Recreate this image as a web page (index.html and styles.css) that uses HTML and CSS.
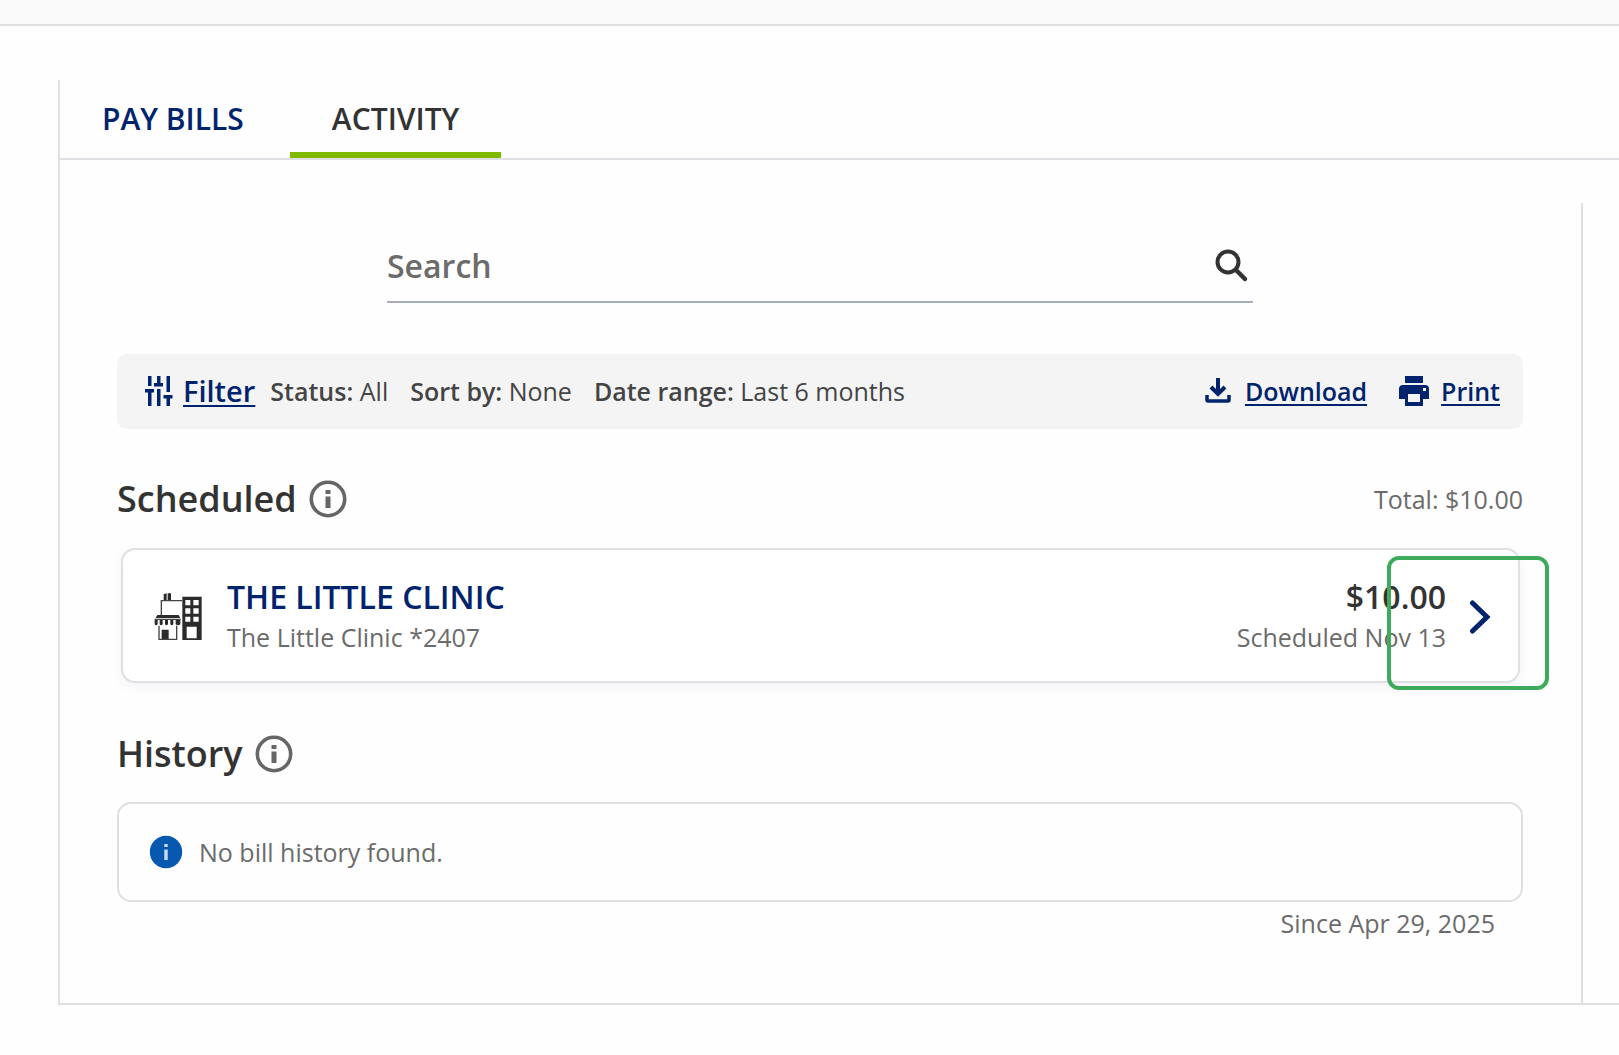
FILE: index.html
```
<!DOCTYPE html>
<html lang="en">
<head>
    <meta charset="UTF-8">
    <meta name="viewport" content="width=device-width, initial-scale=1.0">
    <title>Bill Pay Activity</title>
    <link rel="stylesheet" href="styles.css">
</head>
<body>
    <header class="topbar"></header>

    <div class="panel">
        <nav class="tabs">
            <a class="tab" href="#pay">PAY BILLS</a>
            <a class="tab active" href="#activity">ACTIVITY</a>
        </nav>

        <main class="content">
            <form class="search">
                <input type="text" id="search" name="search" placeholder="Search" aria-label="Search">
                <button type="submit" aria-label="Search bills">
                    <svg width="44" height="44" viewBox="0 0 44 44" fill="none" stroke="#333" stroke-linecap="round">
                        <circle cx="19" cy="18" r="10.5" stroke-width="4"/>
                        <path d="M27 26l9 9" stroke-width="4.5"/>
                    </svg>
                </button>
            </form>

            <div class="toolbar">
                <a class="tool filter" href="#filter">
                    <svg width="28" height="30" viewBox="0 0 28 30" fill="#00236e">
                        <path d="M3 0h3.5v10H3zM0 13h9v3.5H6.5V30H3V16.5H0zM12 0h3.5v7H18v3.5H9V7h3zM12 13h3.5v17H12zM21.5 0H25v16h-3.5zM18.5 19h9v3.5H25V30h-3.5v-7.5h-3z"/>
                    </svg>
                    <span>Filter</span>
                </a>
                <span class="option"><b>Status:</b> All</span>
                <span class="option"><b>Sort by:</b> None</span>
                <span class="option"><b>Date range:</b> Last 6 months</span>
                <div class="actions">
                    <a class="tool download" href="#download">
                        <svg width="26" height="26" viewBox="0 0 26 26" fill="none" stroke="#00236e" stroke-width="4">
                            <path d="M13 0v15M6 9l7 7 7-7"/>
                            <path d="M2 17v5q0 1 1 1h20q1 0 1-1v-5" stroke-width="3.5"/>
                        </svg>
                        <span>Download</span>
                    </a>
                    <a class="tool" href="#print">
                        <svg width="30" height="30" viewBox="0 0 30 30" fill="#00236e">
                            <path d="M6 0h18v7H6z"/>
                            <path fill-rule="evenodd" d="M4 9h22q4 0 4 4v10h-6v7H6v-7H0V13q0-4 4-4zM9 18v8h12v-8zM24 12v3h3v-3z"/>
                        </svg>
                        <span>Print</span>
                    </a>
                </div>
            </div>

            <section class="scheduled">
                <div class="heading">
                    <h2>Scheduled</h2>
                    <svg width="38" height="38" viewBox="0 0 38 38" fill="#666">
                        <circle cx="19" cy="19" r="16.7" fill="none" stroke="#666" stroke-width="3.6"/>
                        <path d="M16.5 10h5v4h-5zM16.5 16.5h5V28h-5z"/>
                    </svg>
                    <span class="total">Total: $10.00</span>
                </div>

                <div class="bill">
                    <svg width="48" height="48" viewBox="0 0 144 144">
                        <path fill="#2b2b2b" fill-rule="evenodd" d="M85 11h58v130H85zM94 21v16h15V21zM118 21v16h16V21zM94 46v16h15V46zM118 46v16h16V46zM94 71v15h15V71zM118 71v15h16V71zM98 101v35h30v-35z"/>
                        <path fill="#2b2b2b" d="M29 4l9-3v20h-9zM41 1h10v20H41zM10 66h64l5 9H5zM2 80h9v14q-5 6-9 0zM17 80h9v14q-5 6-9 0zM33 80h9v14q-5 6-9 0zM49 80h9v14q-5 6-9 0zM65 80h14v14q-7 6-14 0zM23 110h21v30H23z"/>
                        <path fill="none" stroke="#444" stroke-width="4" d="M22 66V23h63M2 79h78M15 98v41h53V98"/>
                    </svg>
                    <div class="payee">
                        <a class="name" href="#bill">THE LITTLE CLINIC</a>
                        <span class="detail">The Little Clinic *2407</span>
                    </div>
                    <div class="amount">
                        <span class="name">$10.00</span>
                        <span class="detail">Scheduled Nov 13</span>
                    </div>
                    <button class="open" type="button" aria-label="Open bill">
                        <svg width="22" height="36" viewBox="0 0 22 36" fill="none" stroke="#00236e" stroke-width="5" stroke-linecap="round">
                            <path d="M3.5 4L18 18 3.5 32"/>
                        </svg>
                    </button>
                    <div class="highlight"></div>
                </div>
            </section>

            <section class="history">
                <div class="heading">
                    <h2>History</h2>
                    <svg width="38" height="38" viewBox="0 0 38 38" fill="#666">
                        <circle cx="19" cy="19" r="16.7" fill="none" stroke="#666" stroke-width="3.6"/>
                        <path d="M16.5 10h5v4h-5zM16.5 16.5h5V28h-5z"/>
                    </svg>
                </div>

                <div class="empty">
                    <svg width="34" height="34" viewBox="0 0 34 34" fill="#c9dcf0">
                        <circle cx="17" cy="17" r="16.2" fill="#0759b0"/>
                        <path d="M15.3 9h3.4v3h-3.4zM15.3 14.5h3.4V25h-3.4z"/>
                    </svg>
                    <span>No bill history found.</span>
                </div>
                <p class="since">Since Apr 29, 2025</p>
            </section>
        </main>
    </div>
</body>
</html>
```

FILE: styles.css
```
* {
  box-sizing: border-box;
}

body {
  margin: 0;
  background-color: #fefefe;
  color: #333;
  font-family: "Open Sans", "Noto Sans", sans-serif;
  font-size: 25px;
  line-height: 36px;
}

a {
  color: #00236e;
}

svg {
  display: block;
  flex-shrink: 0;
}

button {
  padding: 0;
  border: 0;
  background: none;
  cursor: pointer;
}

.topbar {
  height: 26px;
  background-color: #fafafa;
  border-bottom: 2px solid #e0e0e2;
}

.panel {
  margin: 54px 0 0 58px;
  border-left: 2px solid #dfdfe4;
  border-bottom: 2px solid #dfdfe4;
}

/* Tabs */
.tabs {
  display: flex;
  gap: 4px;
  height: 80px;
  border-bottom: 2px solid #dfdfe4;
}

.tab {
  padding: 19px 42px 0;
  border-bottom: 6px solid transparent;
  font-size: 30px;
  font-weight: 600;
  line-height: 40px;
  text-decoration: none;
}

.tab.active {
  color: #333;
  border-bottom-color: #80ba00;
}

.content {
  margin: 43px 36px 0 0;
  padding: 32px 58px 62px 57px;
  border-right: 2px solid #dfdfe4;
}

/* Search */
.search {
  display: flex;
  align-items: center;
  width: 866px;
  max-width: 100%;
  height: 68px;
  margin: 0 auto 51px;
  padding-bottom: 4px;
  border-bottom: 2px solid #a8acb8;
}

.search input {
  flex: 1;
  min-width: 0;
  padding: 0 0 2px;
  border: 0;
  outline: 0;
  background: none;
  color: #333;
  font-family: inherit;
  font-size: 32px;
  font-weight: 600;
}

.search input::placeholder {
  color: #6b6b6b;
  opacity: 1;
}

/* Filter bar */
.toolbar {
  display: flex;
  align-items: center;
  gap: 22px;
  min-height: 75px;
  padding: 0 23px 2px 28px;
  border-radius: 10px;
  background-color: #f4f4f4;
}

.toolbar b {
  font-weight: 600;
}

.option {
  color: #444;
}

.tool {
  display: flex;
  align-items: center;
  gap: 12px;
  font-weight: 600;
  text-decoration: none;
}

.tool span {
  text-decoration: underline;
  text-decoration-thickness: 2px;
  text-underline-offset: 3px;
}

.filter {
  gap: 10px;
  margin-right: -7px;
  font-size: 29px;
}

.download {
  gap: 14px;
}

.actions {
  display: flex;
  gap: 32px;
  margin-left: auto;
}

/* Section headings */
.heading {
  display: flex;
  align-items: center;
  height: 50px;
  gap: 12px;
}

h2 {
  margin: 0;
  font-size: 36px;
  font-weight: 600;
  line-height: 50px;
}

.total {
  margin-left: auto;
  color: #6b6b6b;
}

.scheduled {
  margin-top: 45px;
}

/* Bill card */
.bill {
  position: relative;
  display: flex;
  align-items: center;
  height: 135px;
  margin: 24px 3px 0 4px;
  padding: 2px 27px 0 31px;
  border: 2px solid #dfdfe4;
  border-radius: 14px;
  background-color: #fff;
  box-shadow: 0 4px 12px rgba(0, 35, 110, 0.05);
}

.payee {
  margin-left: 25px;
}

.amount {
  margin-left: auto;
  text-align: right;
}

.name {
  display: block;
  font-size: 32px;
  font-weight: 600;
  line-height: 40px;
  text-decoration: none;
}

.detail {
  display: block;
  color: #6b6b6b;
  line-height: 40px;
}

.open {
  margin-left: 23px;
}

.highlight {
  position: absolute;
  top: 6px;
  right: -31px;
  width: 162px;
  height: 134px;
  border: 4px solid #3dab5b;
  border-radius: 12px;
  pointer-events: none;
}

/* History */
.history {
  margin-top: 46px;
}

.empty {
  display: flex;
  align-items: center;
  gap: 16px;
  height: 100px;
  margin-top: 23px;
  padding: 0 30px;
  border: 2px solid #dfdfe4;
  border-radius: 14px;
  color: #6b6b6b;
}

.since {
  margin: 3px 28px 0;
  color: #6b6b6b;
  text-align: right;
}
```
